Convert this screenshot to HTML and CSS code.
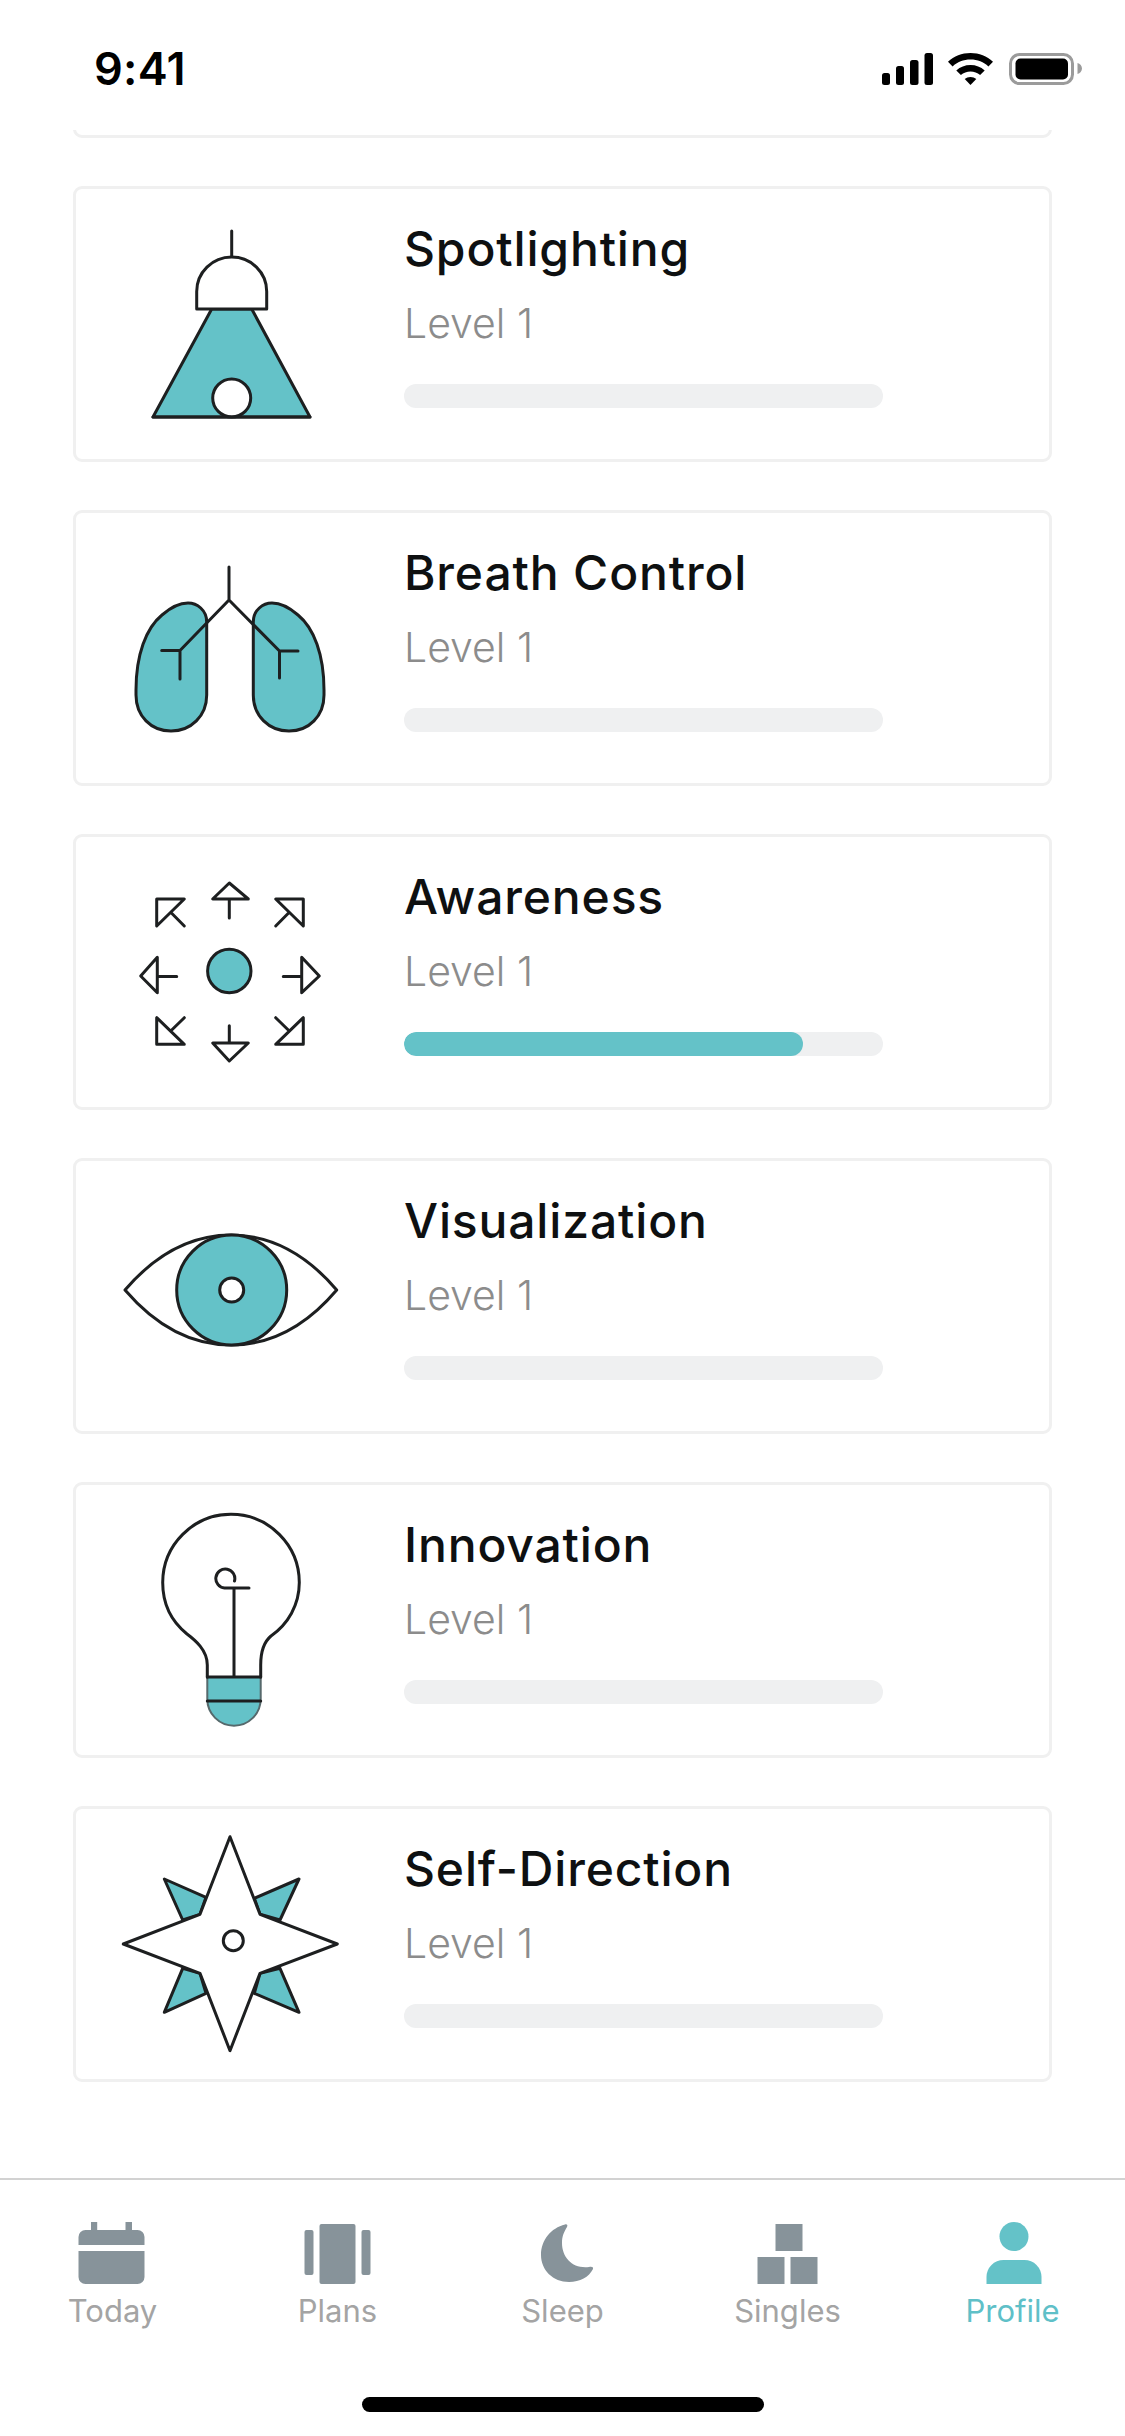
FILE: index.html
```html
<!DOCTYPE html>
<html lang="en">
<head>
<meta charset="utf-8">
<title>Profile</title>
<link rel="stylesheet" href="styles.css">
</head>
<body>
<div class="phone">
  <header class="status">
    <span class="clock">9:41</span>
    <svg class="status-icons" viewBox="880 50 204 38" aria-hidden="true">
      <rect class="solid" x="882" y="73" width="8" height="12" rx="2.5"/>
      <rect class="solid" x="896" y="66" width="8" height="19" rx="2.5"/>
      <rect class="solid" x="910" y="60" width="8.5" height="25" rx="2.5"/>
      <rect class="solid" x="924.5" y="53" width="8.5" height="32" rx="2.5"/>
      <path class="solid" d="M970.5 53c8.700 0 16.500 3.300 22.500 8.700l-4.600 4.700c-4.700-4.200-10.900-6.800-17.900-6.800s-13.200 2.600-17.900 6.800l-4.600-4.700c6-5.400 13.800-8.700 22.500-8.700z"/>
      <path class="solid" d="M970.500 65c5.400 0 10.300 2 14.200 5.400l-4.600 4.700c-2.600-2.200-6-3.500-9.600-3.500s-7 1.300-9.600 3.500l-4.600-4.700c3.900-3.400 8.800-5.400 14.200-5.400z"/>
      <path class="solid" d="M970.500 77c2.200 0 4.200.8 5.800 2.100l-5.800 5.900-5.800-5.900c1.600-1.300 3.600-2.100 5.800-2.100z"/>
      <rect class="battery-shell" x="1010.500" y="54.500" width="62" height="29" rx="9"/>
      <rect class="solid" x="1015.500" y="58.500" width="52.500" height="21" rx="5"/>
      <path class="battery-nub" d="M1077.500 63c2.600.8 4.500 3 4.500 5.500s-1.900 4.700-4.500 5.500z"/>
    </svg>
  </header>

  <main class="list">
    <!-- the row above has scrolled under the status bar; only its lower edge remains -->
    <article class="card"></article>

    <article class="card">
      <svg class="art" viewBox="110 189 240 270" aria-hidden="true">
        <path class="line" d="M231.700 231v26"/>
        <path class="teal line" d="M211.700 309L153 417h157L251.700 309z"/>
        <path class="paper line" d="M196.700 309v-17.500a35 34.500 0 0 1 70 0V309z"/>
        <circle class="paper line" cx="231.700" cy="398" r="19"/>
        <path class="line" d="M153 417h157"/>
      </svg>
      <div class="card-text">
        <h2 class="skill">Spotlighting</h2>
        <p class="level">Level 1</p>
        <div class="track"></div>
      </div>
    </article>

    <article class="card">
      <svg class="art" viewBox="110 513 240 270" aria-hidden="true">
        <path class="teal line" d="M206.700 695V622C206.700 610 197 603 188 603C180 603 170 608 162 615C146 628 136 655 136 690V695C136 716 151 731 171 731C191 731 206.700 716 206.700 695Z"/>
        <path class="teal line" d="M253.300 695V622C253.300 610 263 603 272 603C280 603 290 608 298 615C314 628 324 655 324 690V695C324 716 309 731 289 731C269 731 253.300 716 253.300 695Z"/>
        <path class="line" d="M229 567V600L180 650.500V679M161.700 650.500H180M229 600L279.500 651V678M279.500 651H298"/>
      </svg>
      <div class="card-text">
        <h2 class="skill">Breath Control</h2>
        <p class="level">Level 1</p>
        <div class="track"></div>
      </div>
    </article>

    <article class="card">
      <svg class="art" viewBox="110 837 240 270" aria-hidden="true">
        <circle class="teal line" cx="229.300" cy="971" r="21.700"/>
        <path class="line" d="M229.300 883L212.700 899H248.300ZM229.300 899V918"/>
        <path class="line" d="M229.300 1061L212.700 1043H248.300ZM229.300 1043V1025.700"/>
        <path class="line" d="M140.700 976L157.300 957.300V992.700ZM157.300 976.500H176.700"/>
        <path class="line" d="M319.300 976L301.700 957.300V992.700ZM301.700 976.500H283.300"/>
        <path class="line" d="M156.700 899H184.300L156.700 926ZM170.700 912.300L184.300 926"/>
        <path class="line" d="M303.300 899H275.700L303.300 926ZM289.300 912.300L275.700 926"/>
        <path class="line" d="M156.700 1044.300H184.300L156.700 1017.700ZM170.700 1031L184.300 1017.700"/>
        <path class="line" d="M303.300 1044.300H275.700L303.300 1017.700ZM289.300 1031L275.700 1017.700"/>
      </svg>
      <div class="card-text">
        <h2 class="skill">Awareness</h2>
        <p class="level">Level 1</p>
        <div class="track"><div class="fill" style="width:83.4%"></div></div>
      </div>
    </article>

    <article class="card">
      <svg class="art" viewBox="110 1161 240 270" aria-hidden="true">
        <path class="line" d="M125 1290C155 1255 190 1235 231 1235C272 1235 307 1255 336.700 1290C307 1325 272 1345 231 1345C190 1345 155 1325 125 1290Z"/>
        <circle class="teal line" cx="231.700" cy="1290" r="55"/>
        <circle class="paper line" cx="231.700" cy="1290" r="12"/>
      </svg>
      <div class="card-text">
        <h2 class="skill">Visualization</h2>
        <p class="level">Level 1</p>
        <div class="track"></div>
      </div>
    </article>

    <article class="card">
      <svg class="art" viewBox="110 1485 240 270" aria-hidden="true">
        <path class="teal" d="M207.300 1677H260.700V1699A26.700 26.700 0 0 1 207.300 1699Z"/>
        <path class="base-edge" d="M207.300 1677V1699A26.700 26.700 0 0 0 260.700 1699V1677"/>
        <path class="line" d="M207.300 1677V1665C207.300 1650 195 1640 187 1634C172 1622 162.700 1605 162.700 1582.600A68.300 68.300 0 0 1 299.300 1582.600C299.300 1605 288 1624 271 1636C265 1641 260.700 1650 260.700 1665V1677"/>
        <path class="line" d="M207.300 1677H260.700M207.300 1701H260.700M234 1677V1588M249 1588H224.500A9.500 9.500 0 1 1 234.500 1581"/>
      </svg>
      <div class="card-text">
        <h2 class="skill">Innovation</h2>
        <p class="level">Level 1</p>
        <div class="track"></div>
      </div>
    </article>

    <article class="card">
      <svg class="art" viewBox="110 1809 240 270" aria-hidden="true">
        <path class="teal line" d="M164.300 1879L206 1897.300L200 1914.300L182.700 1920Z"/>
        <path class="teal line" d="M299 1879L254.300 1898.300L260 1914.300L280 1920Z"/>
        <path class="teal line" d="M164.300 2012.300L206 1993.300L200 1973.300L182.700 1968.300Z"/>
        <path class="teal line" d="M299 2012.300L254.300 1993.300L260 1973.300L280 1968.300Z"/>
        <path class="paper line" d="M230 1836.700L260 1914.300L337.300 1944L260 1973.300L230 2050.700L200 1973.300L123.300 1944L200 1914.300Z"/>
        <circle class="paper line" cx="233.300" cy="1940.700" r="10"/>
      </svg>
      <div class="card-text">
        <h2 class="skill">Self-Direction</h2>
        <p class="level">Level 1</p>
        <div class="track"></div>
      </div>
    </article>
  </main>

  <nav class="tabs">
    <div class="tab">
      <svg class="tab-icon" viewBox="0 0 100 64" aria-hidden="true">
        <path d="M28 0h6.200v8h28.300V0h6.500v8h5.500a7 7 0 0 1 7 7v8H15.500v-8a7 7 0 0 1 7-7H28z"/>
        <path d="M15.500 29h66v26a7 7 0 0 1-7 7h-52a7 7 0 0 1-7-7z"/>
      </svg>
      <span class="tab-label">Today</span>
    </div>
    <div class="tab">
      <svg class="tab-icon" viewBox="0 0 100 64" aria-hidden="true">
        <rect x="16.500" y="8" width="9" height="45" rx="2"/>
        <rect x="31.500" y="2" width="36" height="60" rx="2"/>
        <rect x="73.500" y="8" width="9" height="45" rx="2"/>
      </svg>
      <span class="tab-label">Plans</span>
    </div>
    <div class="tab">
      <svg class="tab-icon" viewBox="0 0 100 64" aria-hidden="true">
        <path d="M52 2.500C38 6 28 18 28 33C28 48 40 60 56 60C67 60 76 55 80 47C80.500 45 79 44.500 76 45C60 47 49 36 49 21C49 14 51 10 54 5C55 3 54 2 52 2.500Z"/>
      </svg>
      <span class="tab-label">Sleep</span>
    </div>
    <div class="tab">
      <svg class="tab-icon" viewBox="0 0 100 64" aria-hidden="true">
        <rect x="37.500" y="2" width="27" height="27"/>
        <rect x="19.500" y="35" width="27" height="27"/>
        <rect x="52.500" y="35" width="27" height="27"/>
      </svg>
      <span class="tab-label">Singles</span>
    </div>
    <div class="tab tab-active">
      <svg class="tab-icon" viewBox="0 0 100 64" aria-hidden="true">
        <ellipse cx="51" cy="14.500" rx="14.500" ry="14.500"/>
        <path d="M23.500 62V55a17 17 0 0 1 17-17h21a17 17 0 0 1 17 17v7z"/>
      </svg>
      <span class="tab-label">Profile</span>
    </div>
  </nav>
  <div class="home-bar"></div>
</div>
</body>
</html>
```
FILE: styles.css
```css
* {
  box-sizing: border-box;
}

html,
body {
  margin: 0;
  padding: 0;
  background: #fff;
}

.phone {
  position: relative;
  width: 1125px;
  height: 2436px;
  display: flex;
  flex-direction: column;
  overflow: hidden;
  font-family: Inter, "Liberation Sans", sans-serif;
}

/* Status bar */
.status {
  flex: none;
  height: 130px;
  padding: 45px 41px 0 94px;
  display: flex;
  justify-content: space-between;
  align-items: flex-start;
}

.clock {
  font-size: 45px;
  line-height: 48px;
  font-weight: 600;
  letter-spacing: 0.3px;
  color: #000;
}

.status-icons {
  width: 204px;
  height: 38px;
  margin-top: 5px;
}

.solid {
  fill: #000;
}

.battery-shell {
  fill: none;
  stroke: #9b9b9b;
  stroke-width: 3;
}

.battery-nub {
  fill: #9b9b9b;
}

/* Skill cards */
.list {
  flex: 1;
  min-height: 0;
  overflow: hidden;
  padding: 0 73px 96px;
  display: flex;
  flex-direction: column;
  justify-content: flex-end;
  gap: 48px;
}

.card {
  flex: none;
  height: 276px;
  border: 3px solid #f0f0f0;
  border-radius: 9px;
  background: #fff;
  display: flex;
}

.art {
  flex: none;
  width: 240px;
  height: 270px;
  margin-left: 34px;
}

.line {
  fill: none;
  stroke: #1d1f20;
  stroke-width: 3;
  stroke-linejoin: round;
  stroke-linecap: round;
}

.teal {
  fill: #64c2c8;
}

.paper {
  fill: #fff;
}

.base-edge {
  fill: none;
  stroke: #56696c;
  stroke-width: 2;
}

.card-text {
  flex: 1;
  padding-left: 54px;
  padding-top: 32px;
}

.skill {
  margin: 0;
  font-size: 48px;
  line-height: 56px;
  font-weight: 500;
  letter-spacing: 0.85px;
  color: #0e1011;
}

.level {
  margin: 22px 0 0;
  font-size: 41px;
  line-height: 48px;
  font-weight: 300;
  color: #8c8c8c;
}

.track {
  width: 479px;
  height: 24px;
  margin-top: 37px;
  border-radius: 12px;
  background: #eff0f1;
  overflow: hidden;
}

.fill {
  height: 100%;
  border-radius: 12px;
  background: #64c2c8;
}

/* Tab bar */
.tabs {
  flex: none;
  height: 258px;
  border-top: 2px solid #d2d2d2;
  padding-top: 42px;
  display: grid;
  grid-template-columns: repeat(5, 225px);
  align-items: start;
}

.tab {
  display: flex;
  flex-direction: column;
  align-items: center;
  fill: #87939a;
  color: #a4a4a4;
}

.tab-active {
  fill: #64c2c8;
  color: #5fc0c8;
}

.tab-icon {
  width: 100px;
  height: 64px;
}

.tab-label {
  margin-top: 5px;
  font-size: 31px;
  line-height: 40px;
  font-weight: 400;
}

.home-bar {
  position: absolute;
  left: 362px;
  top: 2397px;
  width: 402px;
  height: 15px;
  border-radius: 8px;
  background: #000;
}
```
